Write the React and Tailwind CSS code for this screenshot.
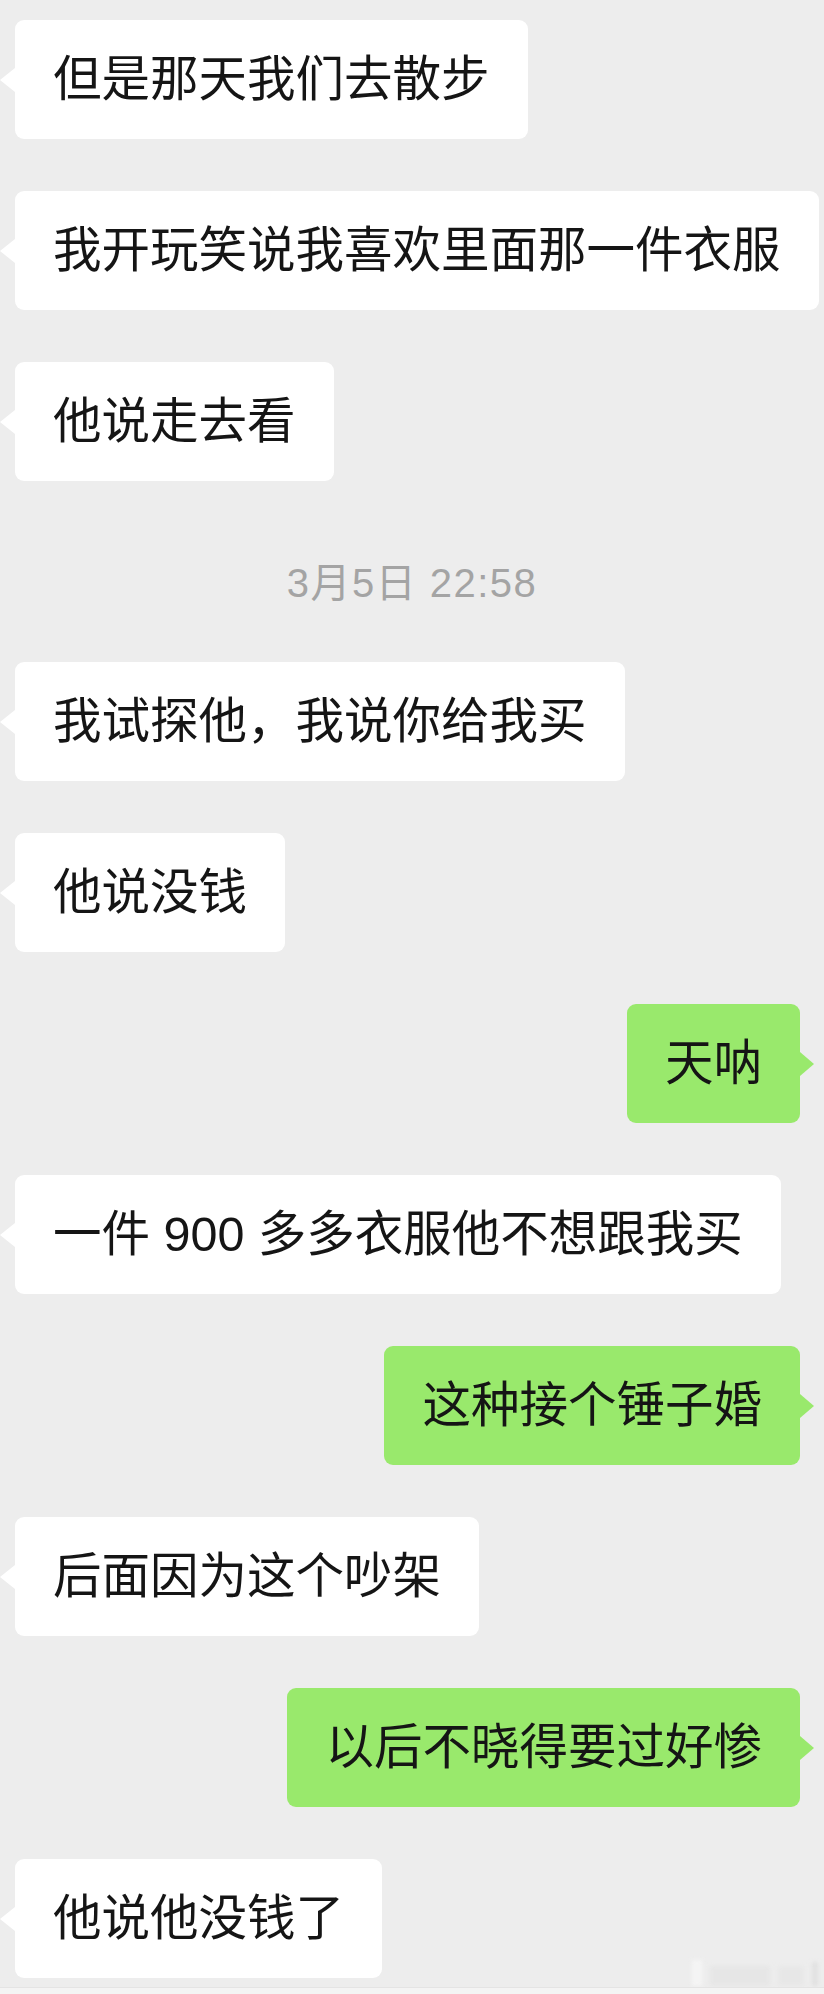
import React from "react";

const messages = [
  { side: "left", text: "但是那天我们去散步" },
  { side: "left", text: "我开玩笑说我喜欢里面那一件衣服" },
  { side: "left", text: "他说走去看" },
  { time: "3月5日 22:58" },
  { side: "left", text: "我试探他，我说你给我买" },
  { side: "left", text: "他说没钱" },
  { side: "right", text: "天呐" },
  { side: "left", text: "一件 900 多多衣服他不想跟我买" },
  { side: "right", text: "这种接个锤子婚" },
  { side: "left", text: "后面因为这个吵架" },
  { side: "right", text: "以后不晓得要过好惨" },
  { side: "left", text: "他说他没钱了" },
];

const font = {
  fontFamily: '"Liberation Sans", "Noto Sans CJK SC", sans-serif',
};

const Bubble = ({ side, text }) => {
  const isMe = side === "right";
  return (
    <div className={`flex ${isMe ? "justify-end pr-[24px]" : "justify-start pl-[15px]"}`}>
      <div
        className={`relative rounded-[9px] px-[38px] py-[26px] text-[48.5px] leading-[67px] text-[#151515] whitespace-nowrap ${
          isMe ? "bg-[#99e96c]" : "bg-white"
        }`}
      >
        {text}
        {isMe ? (
          <span className="absolute right-[-14px] top-1/2 -translate-y-1/2 w-0 h-0 border-y-[12px] border-y-transparent border-l-[14px] border-l-[#99e96c]" />
        ) : (
          <span className="absolute left-[-15px] top-1/2 -translate-y-1/2 w-0 h-0 border-y-[12px] border-y-transparent border-r-[15px] border-r-white" />
        )}
      </div>
    </div>
  );
};

export default function App() {
  return (
    <div className="relative w-[824px] h-[1994px] overflow-hidden bg-[#ededed]" style={font}>
      <div className="flex flex-col gap-[52px] pt-[20px]">
        {messages.map((m, i) =>
          m.time ? (
            <div
              key={i}
              className="flex justify-center pt-[30px] pb-[7px] text-[40px] leading-[40px] tracking-[1.5px] text-[#a4a4a4]"
            >
              {m.time}
            </div>
          ) : (
            <Bubble key={i} side={m.side} text={m.text} />
          )
        )}
      </div>

      {/* faint watermark at bottom right */}
      <div className="absolute right-[6px] bottom-[8px] flex items-end gap-[8px] opacity-60 blur-[2px]">
        <div className="w-[10px] h-[26px] bg-[#fafafa]" />
        <div className="w-[60px] h-[20px] bg-[#e2e2e2]" />
        <div className="w-[26px] h-[20px] bg-[#e4e4e4]" />
        <div className="w-[6px] h-[24px] bg-[#d8d8d8]" />
      </div>
      <div className="absolute left-0 right-0 bottom-0 h-[7px] bg-[#f4f4f4] border-t border-[#e4e4e4]" />
    </div>
  );
}
